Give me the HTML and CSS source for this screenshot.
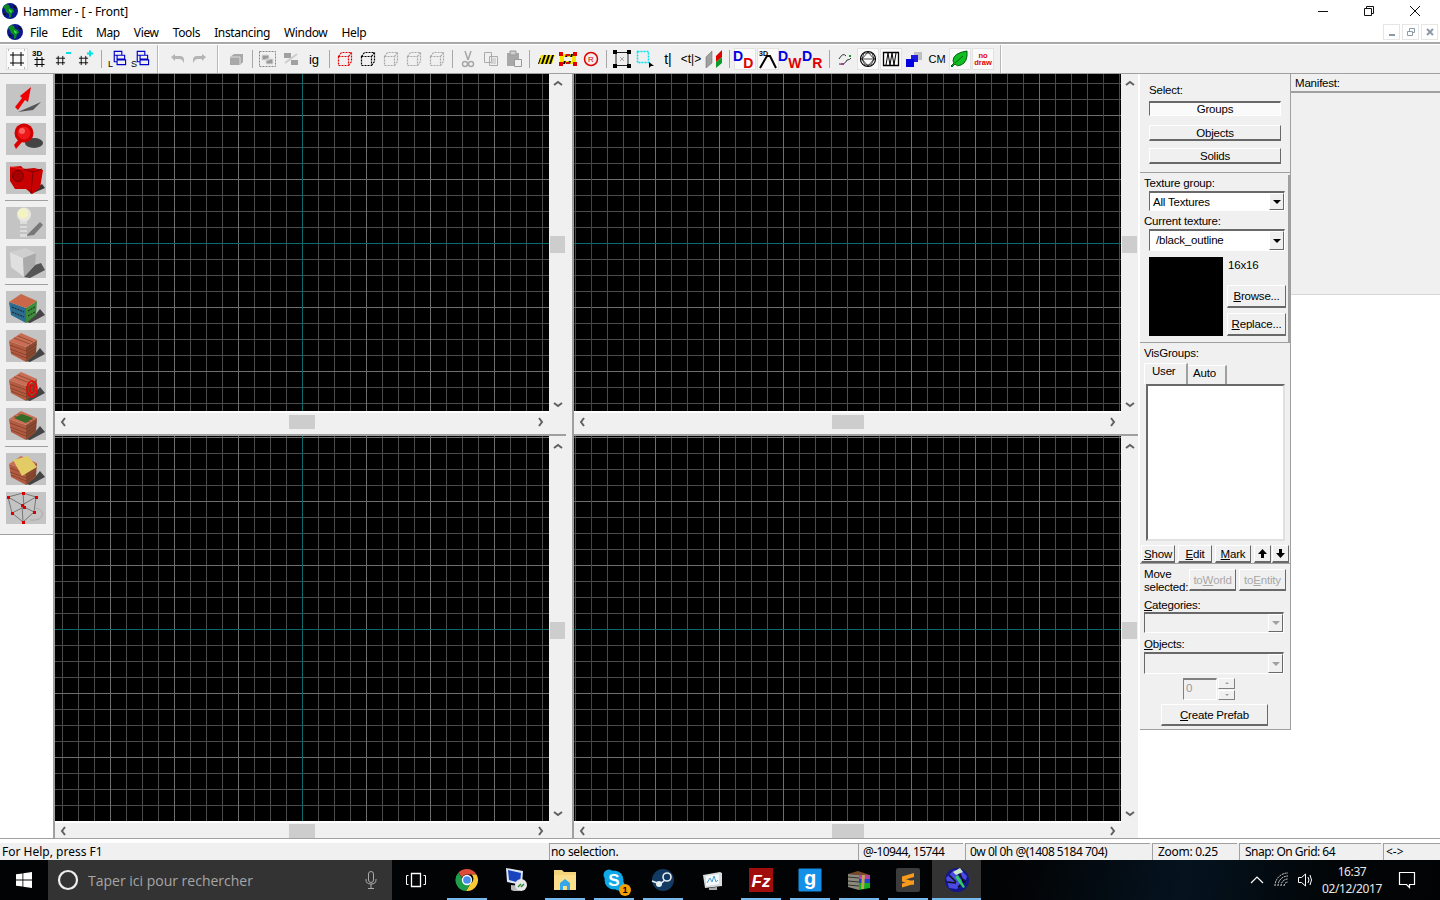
FILE: index.html
```html
<!DOCTYPE html>
<html lang="en">
<head>
    <meta charset="UTF-8">
    <title>Hammer - [ - Front]</title>
    <link rel="stylesheet" href="styles.css">
</head>
<body>
<svg class="defs" aria-hidden="true">
    <defs>
        <symbol id="globe" viewBox="0 0 16 16">
            <circle cx="8" cy="8" r="8" fill="#0a1a8c"/>
            <path d="M1 4l3-3 3 1 1 3 3 1 1 3-2 1-1 4-2 1 0-4-3-2-1-3z" fill="#0b8a22"/>
            <path d="M12 2l3 3-1 1-3-2zM2 10l2 1 0 2-2-1z" fill="#111"/>
            <path d="M7 6l3 2-1 2-2-2z" fill="#39e04a"/>
        </symbol>
        <symbol id="hash" viewBox="0 0 12 12">
            <path d="M3.500 1v10M8.500 1v10M1 3.500h10M1 8.500h10" stroke="#000" fill="none"/>
        </symbol>
        <symbol id="stack" viewBox="0 0 18 18">
            <path d="M4.500 1.500h8v4h-8zM7.500 5.500h8v4h-8zM7.500 10.500h9v5h-9zM4.500 5.500v7h3" fill="none" stroke="#0000c8" stroke-width="1.200"/>
        </symbol>
        <symbol id="dashcube" viewBox="0 0 16 16">
            <path d="M1.500 5.500h10v9h-10zM1.500 5.500l3-4h10l-3 4M14.500 1.500v9l-3 4" fill="none" stroke="currentColor" stroke-dasharray="2 1" stroke-width="1.200"/>
        </symbol>
        <symbol id="brick" viewBox="0 0 40 32">
            <path d="M20 31l10-8 4-5 5 6-15 8z" fill="#444"/>
            <path d="M3 11l17 6v15L5 24z" fill="#b45c42"/>
            <path d="M20 17l11-7-1 14-10 8z" fill="#8a4a32"/>
            <path d="M3 11L15 3l16 7-11 7z" fill="#c96e54"/>
            <path d="M4 15l16 6M4 19l16 6M5 22l15 6M20 21l11-7M20 25l10-7M20 28l10-7M8 8l16 6M12 6l15 6" stroke="#6e3424" stroke-width=".6" fill="none"/>
        </symbol>
    </defs>
</svg>

<div class="app">
    <header class="titlebar">
        <svg class="globe-sm"><use href="#globe"/></svg>
        <span class="title-text">Hammer - [ - Front]</span>
        <div class="win-btns">
            <span class="win-btn"><svg width="12" height="12" viewBox="0 0 12 12"><path d="M1 6.500h10" stroke="#111"/></svg></span>
            <span class="win-btn"><svg width="12" height="12" viewBox="0 0 12 12"><path d="M1.500 3.500h7v7h-7zM3.500 3.500v-2h7v7h-2" fill="none" stroke="#111"/></svg></span>
            <span class="win-btn"><svg width="12" height="12" viewBox="0 0 12 12"><path d="M1 1l10 10M11 1L1 11" stroke="#111"/></svg></span>
        </div>
    </header>

    <nav class="menubar">
        <svg class="globe-sm"><use href="#globe"/></svg>
        <ul class="menu">
            <li>File</li><li>Edit</li><li>Map</li><li>View</li><li>Tools</li><li>Instancing</li><li>Window</li><li>Help</li>
        </ul>
        <div class="mdi-btns">
            <span class="mdi-btn"><svg width="10" height="10" viewBox="0 0 10 10"><path d="M2 8h6" stroke="#8a9aa6" stroke-width="2"/></svg></span>
            <span class="mdi-btn"><svg width="10" height="10" viewBox="0 0 10 10"><path d="M1.500 4.500h5v4h-5zM3.500 4V1.500h5v4H7" fill="none" stroke="#8a9aa6"/></svg></span>
            <span class="mdi-btn"><svg width="10" height="10" viewBox="0 0 10 10"><path d="M2 2l6 6M8 2L2 8" stroke="#8a9aa6" stroke-width="2"/></svg></span>
        </div>
    </nav>

    <div class="toolbar">
        <span class="tb on"><svg width="20" height="20" viewBox="0 0 20 20"><path d="M6 3v14M14 3v14M3 6h14M3 14h14" stroke="#000"/><path d="M1 1h2M17 1h2M1 19h2M17 19h2" stroke="#777" stroke-dasharray="1 1"/></svg></span>
        <span class="tb"><svg class="ov" width="20" height="20" viewBox="0 0 20 20"><text x="2" y="7" class="ic-b" font-size="8">3D</text><use href="#hash" x="3" y="7" width="13" height="12"/></svg></span>
        <span class="tb"><svg width="20" height="20" viewBox="0 0 20 20"><use href="#hash" x="2" y="6" width="11" height="11"/><path d="M13 4h5" stroke="#00e0e0" stroke-width="2"/></svg></span>
        <span class="tb"><svg width="20" height="20" viewBox="0 0 20 20"><use href="#hash" x="2" y="6" width="11" height="11"/><path d="M11 4.500h6M14 1.500v6" stroke="#00e0e0" stroke-width="2"/></svg></span>
        <i class="sep"></i>
        <span class="tb"><svg class="ov" width="20" height="20" viewBox="0 0 20 20"><text x="1" y="18" class="ic-n" font-size="9">L</text><use href="#stack" x="3" y="1" width="17" height="17"/></svg></span>
        <span class="tb"><svg class="ov" width="20" height="20" viewBox="0 0 20 20"><text x="1" y="18" class="ic-n" font-size="9">S</text><use href="#stack" x="3" y="1" width="17" height="17"/></svg></span>
        <i class="divider"></i>
        <span class="tb"><svg width="20" height="20" viewBox="0 0 20 20"><path d="M4 8l4-3v2h5q4 0 4 4v3l-2-3q-1-1-3-1H8v2z" fill="#b4b4b4"/></svg></span>
        <span class="tb"><svg width="20" height="20" viewBox="0 0 20 20"><path d="M16 8l-4-3v2H7q-4 0-4 4v3l2-3q1-1 3-1h4v2z" fill="#b4b4b4"/></svg></span>
        <i class="divider"></i>
        <span class="tb"><svg width="20" height="20" viewBox="0 0 20 20"><path d="M3 8l4-3h9v8l-3 3H3z" fill="#a8a8a8"/><path d="M3 8h10v8" fill="none" stroke="#ddd"/></svg></span>
        <i class="sep"></i>
        <span class="tb"><svg width="20" height="20" viewBox="0 0 20 20"><path d="M1.500 2.500h16v15h-16z" fill="none" stroke="#888" stroke-dasharray="2 1"/><path d="M4 6h7v5H4zM8 10h7v5H8z" fill="#9a9a9a" stroke="#ddd"/></svg></span>
        <span class="tb"><svg width="20" height="20" viewBox="0 0 20 20"><path d="M3 4h7v5H3zM10 11h7v5h-7z" fill="#a0a0a0"/><path d="M4 14l12-9" stroke="#ccc" stroke-width="2"/></svg></span>
        <span class="tb"><span class="ic-html ig">ig</span></span>
        <i class="sep"></i>
        <span class="tb dc-red"><svg width="16" height="16"><use href="#dashcube"/></svg></span>
        <span class="tb dc-black"><svg width="16" height="16"><use href="#dashcube"/></svg></span>
        <span class="tb dc-gray"><svg width="16" height="16"><use href="#dashcube"/></svg></span>
        <span class="tb dc-gray"><svg width="16" height="16"><use href="#dashcube"/></svg></span>
        <span class="tb dc-gray"><svg width="16" height="16"><use href="#dashcube"/></svg></span>
        <i class="sep"></i>
        <span class="tb"><svg width="20" height="20" viewBox="0 0 20 20"><path d="M7 2l3 9M13 2l-3 9" stroke="#a8a8a8" stroke-width="1.500"/><circle cx="7" cy="15" r="2.500" fill="none" stroke="#a8a8a8" stroke-width="1.500"/><circle cx="13" cy="15" r="2.500" fill="none" stroke="#a8a8a8" stroke-width="1.500"/></svg></span>
        <span class="tb"><svg width="20" height="20" viewBox="0 0 20 20"><path d="M3.500 3.500h7v10h-7zM8.500 7.500h8v9h-8z" fill="#f0f0f0" stroke="#aaa"/><path d="M10 10h5M10 12h5M10 14h5" stroke="#bbb"/></svg></span>
        <span class="tb"><svg width="20" height="20" viewBox="0 0 20 20"><path d="M3 4h12v13H3z" fill="#a8a8a8"/><path d="M6 2h6v4H6z" fill="#cfcfcf" stroke="#999"/><path d="M10.500 10.500h7v7h-7z" fill="#f0f0f0" stroke="#999"/></svg></span>
        <i class="sep"></i>
        <span class="tb"><svg width="20" height="20" viewBox="0 0 20 20"><path d="M3 15l3-9h14l-3 9z" fill="#f4e400"/><path d="M6 15l3-9h2l-3 9zM10 15l3-9h2l-3 9zM14 15l3-9h2l-3 9zM3 15l2-6h1l-2 6z" fill="#000"/></svg></span>
        <span class="tb"><svg width="20" height="20" viewBox="0 0 20 20"><path d="M2 5h16v10H2z" fill="#f4e400"/><path d="M5 15l3-10h2l-3 10zM10 15l3-10h2l-3 10z" fill="#000"/><path d="M6 8h8v4H6z" fill="#f0f0f0"/><path d="M1 3h4v4H1zM15 3h4v4h-4zM1 13h4v4H1zM15 13h4v4h-4z" fill="#e00000"/><path d="M8 5h4v2H8zM8 13h4v2H8z" fill="#d01010"/></svg></span>
        <span class="tb"><svg width="20" height="20" viewBox="0 0 20 20"><circle cx="10" cy="10" r="6.500" fill="none" stroke="#e00000" stroke-width="1.500"/><text x="10" y="13" text-anchor="middle" class="ic-n red" font-size="8">R</text></svg></span>
        <i class="sep"></i>
        <span class="tb"><svg width="20" height="20" viewBox="0 0 20 20"><path d="M4 3.500h12v13H4z" fill="none" stroke="#222"/><path d="M1 1h4v4H1zM15 1h4v4h-4zM1 15h4v4H1zM15 15h4v4h-4z" fill="#000"/><path d="M8 8l4 4M12 8l-4 4" stroke="#aaa"/></svg></span>
        <span class="tb"><svg width="20" height="20" viewBox="0 0 20 20"><path d="M2.500 2.500h11v11h-11z" fill="none" stroke="#00e0f0" stroke-width="1.500" stroke-dasharray="2 1"/><path d="M14 13v6l2-2h3z" fill="#000"/></svg></span>
        <span class="tb"><span class="ic-html tl">t|</span></span>
        <span class="tb"><span class="ic-html tl2">&lt;t|&gt;</span></span>
        <span class="tb"><svg width="20" height="20" viewBox="0 0 20 20"><path d="M2 8l6-6v12l-6 5z" fill="#a0a0a0" stroke="#666" stroke-width=".5"/><path d="M12 7l6-6v7l-6 5z" fill="#e00000"/><path d="M12 13l6-5v6l-6 5z" fill="#0a9a2a"/></svg></span>
        <i class="sep"></i>
        <span class="tb on"><svg class="ov" width="20" height="20" viewBox="0 0 20 20"><text x="-2" y="12" class="ic-b blue" font-size="14">D</text><text x="8.200" y="19" class="ic-b red" font-size="14">D</text></svg></span>
        <span class="tb on"><svg class="ov" width="20" height="20" viewBox="0 0 20 20"><text x="1" y="7" class="ic-b" font-size="7">3D</text><path d="M2 19L9 7h3l6 12" fill="none" stroke="#000" stroke-width="2"/></svg></span>
        <span class="tb"><svg class="ov" width="20" height="20" viewBox="0 0 20 20"><text x="-3" y="12" class="ic-b blue" font-size="14">D</text><text x="7.200" y="19" class="ic-b red" font-size="14">W</text></svg></span>
        <span class="tb"><svg class="ov" width="20" height="20" viewBox="0 0 20 20"><text x="-2" y="12" class="ic-b blue" font-size="14">D</text><text x="8.200" y="19" class="ic-b red" font-size="14">R</text></svg></span>
        <i class="sep"></i>
        <span class="tb"><svg width="20" height="20" viewBox="0 0 20 20"><path d="M4 10q4-7 7-3M4 15q6 1 8-4M12 11q3 0 4-2" fill="none" stroke="#333"/><path d="M6 15h3" stroke="#b030b0" stroke-width="2"/><path d="M14 7h2" stroke="#0a9a2a" stroke-width="2"/></svg></span>
        <span class="tb on"><svg width="20" height="20" viewBox="0 0 20 20"><circle cx="10" cy="10" r="7.500" fill="none" stroke="#000" stroke-width="1.200"/><path d="M2.500 10h15M6 4l-2 6 3 6h6l3-6-2-6zM4 10l6-7 6 7-6 7z" fill="none" stroke="#000" stroke-width=".7"/></svg></span>
        <span class="tb on"><svg width="20" height="20" viewBox="0 0 20 20"><path d="M2.500 3.500h15v13h-15z" fill="none" stroke="#000" stroke-width="1.300"/><path d="M5 16l2-12 2 12 2-12 2 12 2-12" fill="none" stroke="#000"/></svg></span>
        <span class="tb"><svg width="20" height="20" viewBox="0 0 20 20"><path d="M10 3h8v8h-8z" fill="#a9a9a9" opacity=".7"/><path d="M7 6h7v7H7z" fill="#1a1ae0"/><path d="M2 10h8v8H2z" fill="#0000e0"/></svg></span>
        <span class="tb"><span class="ic-html cm">CM</span></span>
        <span class="tb on"><svg width="20" height="20" viewBox="0 0 20 20"><path d="M3 12Q3 4 17 2q1 11-6 14-4 2-6-1l-3 3-1-1 3-3z" fill="#10c020" stroke="#065f10" stroke-width="1"/><path d="M5 14l8-7" stroke="#065f10"/></svg></span>
        <span class="tb on"><span class="ic-html nodraw">no<br>draw</span></span>
        <i class="divider"></i>
    </div>

    <main class="workspace">
        <aside class="tools">
            <span class="tile"><svg width="40" height="32" viewBox="0 0 40 32"><path d="M12 28l23-10-8 8z" fill="#555"/><path d="M9 23l7-9-2-2L25 3l-3 15-3-2-7 10z" fill="#f00000"/></svg></span>
            <span class="tile"><svg width="40" height="32" viewBox="0 0 40 32"><ellipse cx="28" cy="20" rx="9" ry="5" fill="#444"/><path d="M8 22l5-6 3 3-6 7z" fill="#e00000"/><circle cx="18" cy="10" r="9.500" fill="#d00000"/><circle cx="18" cy="10" r="6.500" fill="#ee1818"/><circle cx="16" cy="8" r="3" fill="#ff6060"/></svg></span>
            <span class="tile"><svg width="40" height="32" viewBox="0 0 40 32"><path d="M24 30l12-8 3 4-14 6z" fill="#333"/><path d="M4 5l11-1 3 3 10-1 9 2-3 18-8 6-6-5H9l-5-8z" fill="#c80000"/><path d="M18 7l9 3 9-3M27 10l-2 21" fill="none" stroke="#780000"/><circle cx="12" cy="14" r="5.500" fill="#a80000" stroke="#700000"/><path d="M4 5l14 2" stroke="#e82020"/></svg></span>
            <i class="tool-sep"></i>
            <span class="tile"><svg width="40" height="32" viewBox="0 0 40 32"><path d="M20 29l14-14 3 3-9 10z" fill="#777"/><path d="M14 11h7v19h-7z" fill="#dcdcdc"/><path d="M14 18h7M14 22h7M14 26h7" stroke="#aaa"/><circle cx="18" cy="7.500" r="7" fill="#e8e8e0"/><circle cx="17" cy="6.500" r="5" fill="#f4f4c0"/></svg></span>
            <span class="tile"><svg width="40" height="32" viewBox="0 0 40 32"><path d="M18 31l11-12 6-2 4 7-15 8z" fill="#555"/><path d="M4 6l13 6 1 19L5 21z" fill="#e0e0e0"/><path d="M17 12l13-5-1 12-11 12z" fill="#aaa"/><path d="M4 6l15-4 11 5-13 5z" fill="#cfcfcf"/></svg></span>
            <i class="tool-sep"></i>
            <span class="tile"><svg width="40" height="32" viewBox="0 0 40 32"><path d="M20 31l10-8 4-5 5 6-15 8z" fill="#444"/><path d="M3 11l17 6v15L5 24z" fill="#2c6c90"/><path d="M20 17l11-7-1 14-10 8z" fill="#3c8c3c"/><path d="M3 11L15 3l16 7-11 7z" fill="#c86848"/><path d="M6 16l12 5M6 21l12 5M22 20l7-4M22 25l7-4" stroke="#1a1a1a" stroke-dasharray="2 1"/></svg></span>
            <span class="tile"><svg width="40" height="32"><use href="#brick"/></svg></span>
            <span class="tile"><svg width="40" height="32" viewBox="0 0 40 32"><use href="#brick" width="40" height="32"/><ellipse cx="26" cy="20" rx="5" ry="8" fill="none" stroke="#f00000" stroke-width="1.600"/><ellipse cx="26" cy="20" rx="2" ry="4" fill="none" stroke="#f00000" stroke-width="1.600"/></svg></span>
            <span class="tile"><svg width="40" height="32" viewBox="0 0 40 32"><use href="#brick" width="40" height="32"/><path d="M8 10l8-4 11 4-7 5z" fill="#356b26"/></svg></span>
            <i class="tool-sep"></i>
            <span class="tile"><svg width="40" height="32" viewBox="0 0 40 32"><use href="#brick" width="40" height="32"/><path d="M7 7L22 3l9 11-15 9z" fill="#e3cc66"/></svg></span>
            <span class="tile"><svg width="40" height="32" viewBox="0 0 40 32"><path d="M30 16q8 2 6 8-2 5-12 4" fill="none" stroke="#aaa"/><path d="M2 5L17 1l13 4-2 15-11 10L6 21zM16 13L2 5M16 13L30 5M16 13l1 17M18 15L17 1M18 15L6 21M18 15l10 5" fill="none" stroke="#777"/><path d="M1 4h3v3H1zM16 0h3v3h-3zM29 4h3v3h-3zM15 12h3v3h-3zM5 20h3v3H5zM17 14h3v3h-3zM27 19h3v3h-3zM16 29h3v3h-3z" fill="#d80000"/></svg></span>
        </aside>

        <section class="views">
            <div class="vp vp-tl">
                <div class="canvas"></div>
                <div class="vscroll"><svg class="chev" viewBox="0 0 10 6"><path d="M1 5l4-3 4 3" /></svg><b class="thumb-v"></b><svg class="chev" viewBox="0 0 10 6"><path d="M1 1l4 3 4-3" /></svg></div>
                <div class="hscroll"><svg class="chev-h" viewBox="0 0 6 10"><path d="M5 1L2 5l3 4" /></svg><b class="thumb-h"></b><svg class="chev-h" viewBox="0 0 6 10"><path d="M1 1l3 4-3 4" /></svg></div>
                <div class="corner"></div>
            </div>
            <div class="vp vp-tr">
                <div class="canvas"></div>
                <div class="vscroll"><svg class="chev" viewBox="0 0 10 6"><path d="M1 5l4-3 4 3" /></svg><b class="thumb-v"></b><svg class="chev" viewBox="0 0 10 6"><path d="M1 1l4 3 4-3" /></svg></div>
                <div class="hscroll"><svg class="chev-h" viewBox="0 0 6 10"><path d="M5 1L2 5l3 4" /></svg><b class="thumb-h wide"></b><svg class="chev-h" viewBox="0 0 6 10"><path d="M1 1l3 4-3 4" /></svg></div>
                <div class="corner"></div>
            </div>
            <div class="vp vp-bl">
                <div class="canvas"></div>
                <div class="vscroll"><svg class="chev" viewBox="0 0 10 6"><path d="M1 5l4-3 4 3" /></svg><b class="thumb-v"></b><svg class="chev" viewBox="0 0 10 6"><path d="M1 1l4 3 4-3" /></svg></div>
                <div class="hscroll"><svg class="chev-h" viewBox="0 0 6 10"><path d="M5 1L2 5l3 4" /></svg><b class="thumb-h"></b><svg class="chev-h" viewBox="0 0 6 10"><path d="M1 1l3 4-3 4" /></svg></div>
                <div class="corner"></div>
            </div>
            <div class="vp vp-br">
                <div class="canvas"></div>
                <div class="vscroll"><svg class="chev" viewBox="0 0 10 6"><path d="M1 5l4-3 4 3" /></svg><b class="thumb-v"></b><svg class="chev" viewBox="0 0 10 6"><path d="M1 1l4 3 4-3" /></svg></div>
                <div class="hscroll"><svg class="chev-h" viewBox="0 0 6 10"><path d="M5 1L2 5l3 4" /></svg><b class="thumb-h wide"></b><svg class="chev-h" viewBox="0 0 6 10"><path d="M1 1l3 4-3 4" /></svg></div>
                <div class="corner"></div>
            </div>
        </section>

        <aside class="side">
            <div class="sec sec-select">
                <div class="lbl select-lbl">Select:</div>
                <div class="btn btn-sel pressed">Groups</div>
                <div class="btn btn-sel">Objects</div>
                <div class="btn btn-sel">Solids</div>
            </div>
            <div class="sec sec-texture">
                <div class="lbl">Texture group:</div>
                <div class="combo combo-a"><span>All Textures</span><b class="drop"><i></i></b></div>
                <div class="lbl lbl-cur">Current texture:</div>
                <div class="combo combo-b"><span>/black_outline</span><b class="drop"><i></i></b></div>
                <div class="tex-row">
                    <div class="tex-preview"></div>
                    <div class="tex-side">
                        <div class="lbl tex-size">16x16</div>
                        <div class="btn btn-tex"><u>B</u>rowse...</div>
                        <div class="btn btn-tex"><u>R</u>eplace...</div>
                    </div>
                </div>
            </div>
            <div class="sec sec-vis">
                <div class="lbl">VisGroups:</div>
                <div class="tabs"><span class="tab tab-on">User</span><span class="tab">Auto</span></div>
                <div class="vislist"></div>
                <div class="vis-btns">
                    <span class="btn btn-w34"><u>S</u>how</span>
                    <span class="btn btn-w34"><u>E</u>dit</span>
                    <span class="btn btn-w36"><u>M</u>ark</span>
                    <span class="btn btn-arr"><svg width="11" height="11" viewBox="0 0 11 11"><path d="M5.500 1L10 6H7v4H4V6H1z"/></svg></span>
                    <span class="btn btn-arr"><svg width="11" height="11" viewBox="0 0 11 11"><path d="M5.500 10L10 5H7V1H4v4H1z"/></svg></span>
                </div>
            </div>
            <div class="sec sec-move">
                <div class="move-row">
                    <div class="lbl move-lbl">Move<br>selected:</div>
                    <span class="btn btn-off">to<u>W</u>orld</span>
                    <span class="btn btn-off">to<u>E</u>ntity</span>
                </div>
                <div class="lbl lbl-cat"><u>C</u>ategories:</div>
                <div class="combo combo-off"><b class="drop drop-off"><i></i></b></div>
                <div class="lbl lbl-obj"><u>O</u>bjects:</div>
                <div class="combo combo-off combo-obj"><b class="drop drop-off"><i></i></b></div>
                <div class="spin-row">
                    <span class="spin-val">0</span>
                    <span class="spin-btns"><i class="up"></i><i class="down"></i></span>
                </div>
                <div class="btn btn-prefab"><u>C</u>reate Prefab</div>
            </div>
        </aside>

        <aside class="manifest-wrap">
            <div class="manifest">
                <div class="manifest-head">Manifest:</div>
            </div>
        </aside>
    </main>

    <footer class="status">
        <span class="pane p-help">For Help, press F1</span>
        <span class="pane p-sel">no selection.</span>
        <span class="pane p-pos">@-10944, 15744</span>
        <span class="pane p-size">0w 0l 0h @(1408 5184 704)</span>
        <span class="pane p-zoom">Zoom: 0.25</span>
        <span class="pane p-snap">Snap: On Grid: 64</span>
        <span class="pane p-last">&lt;-&gt;</span>
    </footer>

    <div class="taskbar">
        <span class="start"><svg width="16" height="16" viewBox="0 0 16 16"><path d="M0 2.300l6.500-.9v6.200H0zM7.300 1.300L16 0v7.600H7.300zM0 8.400h6.500v6.200L0 13.700zM7.300 8.400H16V16l-8.700-1.200z" fill="#fff"/></svg></span>
        <div class="search">
            <svg class="search-ring" width="22" height="22" viewBox="0 0 22 22"><circle cx="11" cy="11" r="9" fill="none" stroke="#eee" stroke-width="2.200"/></svg>
            <span class="search-text">Taper ici pour rechercher</span>
            <svg width="12" height="18" viewBox="0 0 12 18"><rect x="3.500" y=".5" width="5" height="11" rx="2.500" fill="none" stroke="#aaa"/><path d="M1 8v1q0 4 5 4t5-4V8M6 13v4M3 17.500h6" fill="none" stroke="#aaa"/></svg>
        </div>
        <span class="taskview"><svg width="22" height="16" viewBox="0 0 22 16"><path d="M6.500 1.500h9v13h-9z" fill="none" stroke="#fff" stroke-width="1.300"/><path d="M3.500 3.500h-2v9h2M18.500 3.500h2v9h-2" fill="none" stroke="#fff"/></svg></span>
        <div class="apps">
            <span class="app-btn run"><svg width="24" height="24" viewBox="0 0 24 24"><path d="M12 1a11 11 0 0 1 9.500 5.500H12a5.500 5.500 0 0 0-5 3.200L3.500 4.500A11 11 0 0 1 12 1z" fill="#dd4b39"/><path d="M21.500 6.500A11 11 0 0 1 11 23l4.500-7.500a5.500 5.500 0 0 0 1-9z" fill="#fcc934"/><path d="M3.500 4.500L8 12a5 5 0 0 0 7.500 3.500L11 23A11 11 0 0 1 3.500 4.500z" fill="#1e9e4a"/><circle cx="12" cy="12" r="4.500" fill="#4a8df0" stroke="#fff" stroke-width="1.300"/></svg></span>
            <span class="app-btn"><svg width="24" height="26" viewBox="0 0 24 26"><path d="M2 1l17 3-1 14-15-3z" fill="#dce6f4"/><path d="M4 3l13 3-1 10-11-3z" fill="#1844c0"/><path d="M7 18l10 1v3a5 2 0 0 1-10 0z" fill="#bbb"/><circle cx="17" cy="18" r="6" fill="#e8e8e8"/><path d="M14 20l3-3M17 20l3-3" stroke="#2a8a3a" stroke-width="1.500"/></svg></span>
            <span class="app-btn run"><svg width="24" height="22" viewBox="0 0 24 22"><path d="M1 1h8l2 2h12v4H1z" fill="#f4d57a"/><path d="M1 6h22v15H1z" fill="#fbdf8a"/><path d="M7 14l5-4 5 4v7h-3v-4h-4v4H7z" fill="#35a7e8"/></svg></span>
            <span class="app-btn run skype"><svg width="24" height="24" viewBox="0 0 24 24"><circle cx="7" cy="7" r="5.500" fill="#0fa8e8"/><circle cx="17" cy="17" r="5.500" fill="#0fa8e8"/><circle cx="12" cy="12" r="9.500" fill="#0fa8e8"/><text x="12" y="18" text-anchor="middle" class="ic-b white" font-size="17">S</text></svg><b class="badge">1</b></span>
            <span class="app-btn run"><svg width="24" height="24" viewBox="0 0 24 24"><circle cx="12" cy="12" r="11" fill="#123a63"/><circle cx="16" cy="9" r="4" fill="none" stroke="#e8edf2" stroke-width="1.600"/><circle cx="8" cy="16" r="3" fill="#e8edf2"/><path d="M1 13l8 3 5-4" fill="none" stroke="#e8edf2" stroke-width="1.600"/></svg></span>
            <span class="app-btn"><svg width="24" height="24" viewBox="0 0 24 24"><path d="M3 7l17-3 2 1v13L5 20z" fill="#d8dde0"/><path d="M6 8l13-2v10L6 18z" fill="#f4f8fa"/><path d="M7 15l3-5 2 4 2-6 2 6 2-2" fill="none" stroke="#4a9fd8"/><path d="M9 20l8-1v3H9z" fill="#aaa"/></svg></span>
            <span class="app-btn run"><svg width="24" height="24" viewBox="0 0 24 24"><path d="M0 0h24v24H0z" fill="#a10c0c"/><text x="12" y="19" text-anchor="middle" class="ic-b white fz" font-size="17">Fz</text></svg></span>
            <span class="app-btn run"><svg width="24" height="24" viewBox="0 0 24 24"><rect width="23" height="23" x=".5" y=".5" rx="1" fill="#1590e8"/><text x="12" y="17" text-anchor="middle" class="ic-b white" font-size="20">g</text></svg></span>
            <span class="app-btn run"><svg width="24" height="24" viewBox="0 0 24 24"><path d="M1 6l10-3 12 4H12z" fill="#7a4a2a"/><path d="M1 6l11 1v15L1 19z" fill="#8c8a7c"/><path d="M12 7h11v4H12z" fill="#b040b0"/><path d="M12 11h11v4H12z" fill="#2040d0"/><path d="M12 15h11v5l-11 2z" fill="#10b020"/><path d="M15 7l-1 14h3l1-14z" fill="#c8a050"/><path d="M1 9l11 1M1 13l11 1M1 17l11 1" stroke="#333"/></svg></span>
            <span class="app-btn run"><svg width="24" height="24" viewBox="0 0 24 24"><rect width="24" height="24" rx="2" fill="#3c3c3c"/><path d="M6 8.500L18 5v4L6 12.500zM6 10l12 3.500V17L6 13.500zM6 15.500L18 12v4L6 19.500z" fill="#f89a1c"/></svg></span>
            <span class="app-btn run active"><svg width="26" height="26" viewBox="0 0 26 26"><circle cx="13" cy="13" r="12" fill="#14168c"/><path d="M2 11l8-8 6 1-4 6 7 2-6 10-8-1zM17 3l6 6-1 4-6-3z" fill="#4a4ae0"/><path d="M5 8l7 7M3 15l9 1M14 20l7-6M15 5l4 9" stroke="#111" stroke-width="1.500"/><path d="M9 5l7-4 3 4-7 3z" fill="#c8e8c8"/><path d="M14 8l7 12-2 1-8-11z" fill="#2fc96c"/></svg></span>
        </div>
        <div class="tray">
            <svg width="14" height="8" viewBox="0 0 14 8"><path d="M1 7l6-6 6 6" fill="none" stroke="#fff" stroke-width="1.200"/></svg>
            <svg class="tray-wifi" width="16" height="16" viewBox="0 0 16 16"><path d="M1 14A13 13 0 0 1 14 1M4 14A10 10 0 0 1 14 4M7 14a7 7 0 0 1 7-7M10 14a4 4 0 0 1 4-4" fill="none" stroke="#ddd" stroke-dasharray="2 .8"/></svg>
            <svg class="tray-vol" width="18" height="16" viewBox="0 0 18 16"><path d="M1.500 5.500h3l4-3.500v12l-4-3.500h-3z" fill="none" stroke="#fff"/><path d="M11 5q2 3 0 6M13 3q3 5 0 10" fill="none" stroke="#fff"/></svg>
            <div class="clock"><span>16:37</span><span>02/12/2017</span></div>
            <svg class="tray-note" width="18" height="18" viewBox="0 0 18 18"><path d="M1.500 1.500h15v12h-5v3l-3-3h-7z" fill="none" stroke="#fff" stroke-width="1.200"/></svg>
        </div>
    </div>
</div>
</body>
</html>
```

FILE: styles.css
```css
html, body {
    margin: 0;
    padding: 0;
    background: #fff;
}
.defs {
    position: absolute;
    width: 0;
    height: 0;
}
.app {
    width: 1440px;
    height: 900px;
    display: flex;
    flex-direction: column;
    overflow: hidden;
    font-family: "Noto Sans", "Open Sans", sans-serif;
    font-size: 12px;
    color: #000;
}

/* title + menu */
.titlebar {
    height: 22px;
    display: flex;
    align-items: center;
    padding-left: 2px;
    background: #fff;
}
.globe-sm {
    width: 16px;
    height: 16px;
    flex: none;
}
.title-text {
    margin-left: 5px;
    font-size: 12px;
    letter-spacing: -0.15px;
}
.win-btns {
    margin-left: auto;
    display: flex;
    padding-right: 2px;
}
.win-btn {
    width: 46px;
    height: 22px;
    display: flex;
    align-items: center;
    justify-content: center;
}
.menubar {
    height: 20px;
    display: flex;
    align-items: center;
    padding-left: 7px;
    background: #fff;
    border-bottom: 2px solid #a8a8a8;
}
.menu {
    list-style: none;
    display: flex;
    margin: 0;
    padding: 0 0 0 7px;
    gap: 14px;
    letter-spacing: -0.35px;
}
.mdi-btns {
    margin-left: auto;
    display: flex;
    gap: 2px;
    padding-right: 2px;
}
.mdi-btn {
    width: 15px;
    height: 14px;
    display: flex;
    align-items: center;
    justify-content: center;
    border: 1px solid #e6e6e6;
}

/* toolbar */
.toolbar {
    height: 29px;
    display: flex;
    align-items: center;
    padding-left: 6px;
    background: #f0f0f0;
    box-sizing: border-box;
    border-top: 1px solid #fff;
}
.tb {
    width: 22px;
    height: 22px;
    margin-right: 1px;
    display: flex;
    align-items: center;
    justify-content: center;
    flex: none;
    box-sizing: border-box;
}
.tb.on {
    background: #fafafa;
    border: 1px solid #e2e2e2;
}
.ov {
    overflow: visible;
}
.sep {
    width: 1px;
    height: 18px;
    margin: 0 4px 0 3px;
    background: #a8a8a8;
    flex: none;
}
.divider {
    width: 2px;
    height: 28px;
    margin: 0 7px 0 5px;
    background: #fff;
    border-left: 1px solid #b8b8b8;
    box-sizing: border-box;
    flex: none;
}
.ic-b {
    font-family: "Liberation Sans", sans-serif;
    font-weight: bold;
}
.ic-n {
    font-family: "Liberation Sans", sans-serif;
}
.blue { fill: #0000e0; }
.red { fill: #e00000; }
.white { fill: #fff; }
.fz { font-style: italic; }
.dc-red { color: #e00000; }
.dc-black { color: #000; }
.dc-gray { color: #a8a8a8; }
.ic-html {
    font-family: "Liberation Sans", sans-serif;
    line-height: 1;
}
.ig { font-size: 13px; }
.tl { font-size: 14px; }
.tl2 { font-size: 12px; white-space: nowrap; }
.cm { font-size: 11px; }
.nodraw {
    font-size: 7.5px;
    color: #e00000;
    text-align: center;
    font-weight: bold;
}

/* main area */
.workspace {
    height: 766px;
    display: flex;
    background: #fff;
    border-bottom: 1px solid #a0a0a0;
    border-top: 1px solid #a0a0a0;
    box-sizing: border-box;
}
.tools {
    width: 53px;
    height: 461px;
    flex: none;
    box-sizing: border-box;
    padding: 10px 0 0 6px;
    background: #f0f0f0;
    border-bottom: 1px solid #a0a0a0;
    display: flex;
    flex-direction: column;
    gap: 7px;
}
.tile {
    width: 40px;
    height: 32px;
    background: #c4c4c4;
    display: block;
}
.tile svg {
    display: block;
}
.tool-sep {
    height: 1px;
    width: 43px;
    margin: -1px 0 -1px -1px;
    background: #a0a0a0;
}

/* the four views */
.views {
    width: 1085px;
    flex: none;
    display: grid;
    grid-template-columns: 519px 566px;
    grid-template-rows: 360px 404px;
    background: #f0f0f0;
}
.vp {
    display: grid;
    grid-template-columns: 1fr 17px;
    grid-template-rows: 1fr 18px;
    border-left: 2px solid #a0a0a0;
    background: #f0f0f0;
}
.vp-tl { margin-right: 6px; padding-bottom: 4px; }
.vp-tr { padding-bottom: 4px; }
.vp-bl { margin-right: 6px; border-top: 2px solid #a0a0a0; }
.vp-br { border-top: 2px solid #a0a0a0; }
.vp-bl, .vp-br { grid-template-rows: 1fr 16px; }
.canvas {
    --minor: #4b4b4b;
    --major: #6e6e6e;
    --axis: linear-gradient(#0e6a6a, #0e6a6a);
    --edge: linear-gradient(#6a3a10, #6a3a10);
    --v-major: linear-gradient(to right, var(--major) 1px, transparent 1px);
    --h-major: linear-gradient(to bottom, var(--major) 1px, transparent 1px);
    --v-minor: linear-gradient(to right, var(--minor) 1px, transparent 1px);
    --h-minor: linear-gradient(to bottom, var(--minor) 1px, transparent 1px);
    background-color: #000;
    border-bottom: 1px solid #fff;
}
.vp-tl .canvas, .vp-bl .canvas {
    background-image: var(--axis), var(--axis), var(--v-major), var(--h-major), var(--v-minor), var(--h-minor);
    background-size: 1px 100%, 100% 1px, 64px 100%, 100% 64px, 16px 100%, 100% 16px;
    background-repeat: no-repeat, no-repeat, repeat, repeat, repeat, repeat;
}
.vp-tl .canvas {
    background-position: 247px 0, 0 169px, 55px 0, 0 41px, 7px 0, 0 9px;
}
.vp-bl .canvas {
    background-position: 247px 0, 0 193px, 55px 0, 0 1px, 7px 0, 0 1px;
}
.vp-tr .canvas, .vp-br .canvas {
    background-image: var(--edge), var(--edge), var(--axis), var(--axis), var(--v-major), var(--h-major), var(--v-minor), var(--h-minor);
    background-size: 1px 100%, 1px 100%, 1px 100%, 100% 1px, 64px 100%, 100% 64px, 16px 100%, 100% 16px;
    background-repeat: no-repeat, no-repeat, no-repeat, no-repeat, repeat, repeat, repeat, repeat;
}
.vp-tr .canvas {
    background-position: 17px 0, 529px 0, 273px 0, 0 169px, 17px 0, 0 41px, 1px 0, 0 9px;
}
.vp-br .canvas {
    background-position: 17px 0, 529px 0, 273px 0, 0 193px, 17px 0, 0 1px, 1px 0, 0 1px;
}
.vscroll {
    display: flex;
    flex-direction: column;
    align-items: center;
    justify-content: space-between;
    padding: 6px 0 4px;
    box-sizing: border-box;
}
.vp-bl .vscroll, .vp-br .vscroll {
    padding: 7px 0 5px;
}
.hscroll {
    display: flex;
    align-items: center;
    justify-content: space-between;
    padding: 0 5px;
    border-top: 1px solid #fff;
    box-sizing: border-box;
}
.chev {
    width: 10px;
    height: 6px;
    flex: none;
}
.chev-h {
    width: 6px;
    height: 10px;
    flex: none;
}
.chev path, .chev-h path {
    fill: none;
    stroke: #606060;
    stroke-width: 2;
}
.thumb-v {
    width: 15px;
    height: 17px;
    background: #cdcdcd;
}
.thumb-h {
    width: 26px;
    height: 14px;
    background: #cdcdcd;
}
.thumb-h.wide {
    width: 32px;
}
.corner {
    background: #f0f0f0;
}

/* side panel */
.side {
    width: 150px;
    height: 655px;
    margin-left: 2px;
    flex: none;
    background: #f0f0f0;
    border-bottom: 1px solid #a0a0a0;
    border-right: 1px solid #a0a0a0;
    font-family: "Liberation Sans", sans-serif;
    font-size: 11.5px;
    letter-spacing: -0.2px;
}
.sec {
    box-sizing: border-box;
    border-bottom: 1px solid #a0a0a0;
    margin-bottom: 2px;
}
.lbl {
    line-height: 13px;
}
.btn {
    display: flex;
    align-items: center;
    justify-content: center;
    box-sizing: border-box;
    background: #f0f0f0;
    border-top: 1px solid #fff;
    border-left: 1px solid #fff;
    border-right: 1px solid #696969;
    border-bottom: 2px solid #696969;
}
.sec-select {
    height: 99px;
    padding: 10px 0 0 9px;
}
.select-lbl {
    height: 17px;
}
.btn-sel {
    width: 132px;
    height: 16px;
    margin-bottom: 7px;
}
.btn-sel.pressed {
    height: 15px;
    margin-bottom: 9px;
    background: #fafafa;
    border-top: 2px solid #696969;
    border-left: 1px solid #696969;
    border-right: 1px solid #fff;
    border-bottom: 1px solid #fff;
}
.sec-texture {
    height: 168px;
    padding: 2px 0 0 4px;
    border-right: 2px solid #a0a0a0;
}
.combo {
    box-sizing: border-box;
    display: flex;
    align-items: center;
    justify-content: space-between;
    background: #fff;
    border-top: 2px solid #696969;
    border-left: 1px solid #696969;
    border-right: 1px solid #fff;
    border-bottom: 1px solid #fff;
}
.combo span {
    padding-left: 3px;
}
.combo-a {
    width: 136px;
    height: 20px;
    margin: 1px 0 0 5px;
}
.lbl-cur {
    margin-top: 4px;
}
.combo-b {
    width: 136px;
    height: 22px;
    margin: 1px 0 0 5px;
}
.combo-b span {
    padding: 0 0 2px 6px;
}
.drop {
    width: 15px;
    height: 100%;
    display: flex;
    align-items: center;
    justify-content: center;
    box-sizing: border-box;
    background: #f0f0f0;
    border-top: 1px solid #fff;
    border-left: 1px solid #fff;
    border-right: 1px solid #696969;
    border-bottom: 1px solid #696969;
}
.drop i {
    border-left: 4px solid transparent;
    border-right: 4px solid transparent;
    border-top: 4px solid #000;
}
.drop-off i {
    border-top-color: #a0a0a0;
}
.tex-row {
    display: flex;
    margin: 6px 0 0 5px;
}
.tex-preview {
    width: 74px;
    height: 79px;
    background: #000;
    flex: none;
}
.tex-side {
    margin-left: 4px;
}
.tex-size {
    height: 28px;
    padding: 2px 0 0 1px;
    box-sizing: border-box;
}
.btn-tex {
    width: 59px;
    height: 23px;
    margin-bottom: 5px;
}
.sec-vis {
    height: 219px;
    padding: 2px 0 0 4px;
}
.tabs {
    display: flex;
    height: 21px;
    align-items: flex-end;
    margin-top: 3px;
}
.tab {
    width: 39px;
    height: 19px;
    box-sizing: border-box;
    padding: 1px 0 0 5px;
    border-top: 1px solid #fff;
    border-right: 2px solid #a0a0a0;
}
.tab-on {
    width: 44px;
    height: 21px;
    padding: 1px 0 0 7px;
    border-left: 1px solid #fff;
}
.vislist {
    width: 139px;
    height: 157px;
    margin: 0 0 0 2px;
    box-sizing: border-box;
    background: #fff;
    border-top: 2px solid #696969;
    border-left: 2px solid #696969;
    border-right: 2px solid #e0e0e0;
    border-bottom: 2px solid #e0e0e0;
}
.vis-btns {
    display: flex;
    margin: 4px 0 0 -3px;
    gap: 3px;
}
.btn-w34 { width: 34px; height: 18px; }
.btn-w36 { width: 36px; height: 18px; }
.btn-arr { width: 17px; height: 18px; margin-right: -2px; }
.sec-move {
    height: 163px;
    margin-bottom: 0;
    border-bottom: 0;
    padding: 2px 0 0 4px;
}
.move-row {
    display: flex;
    height: 26px;
    gap: 3px;
    align-items: center;
}
.move-lbl {
    width: 42px;
    white-space: nowrap;
}
.btn-off {
    width: 47px;
    height: 22px;
    margin-bottom: 2px;
    color: #a8a8a8;
}
.lbl-cat {
    margin-top: 5px;
}
.lbl-obj {
    margin-top: 5px;
}
.combo-off {
    width: 140px;
    height: 21px;
    background: #f0f0f0;
    justify-content: flex-end;
}
.combo-obj {
    height: 22px;
    margin-top: 1px;
}
.spin-row {
    display: flex;
    margin: 4px 0 0 39px;
}
.spin-val {
    width: 34px;
    height: 22px;
    box-sizing: border-box;
    padding: 2px 0 0 2px;
    color: #999;
    border-top: 2px solid #808080;
    border-left: 1px solid #808080;
    border-right: 1px solid #fff;
    border-bottom: 1px solid #fff;
}
.spin-btns {
    width: 17px;
    margin-left: 1px;
    display: flex;
    flex-direction: column;
    gap: 1px;
}
.spin-btns i {
    flex: 1;
    display: flex;
    align-items: center;
    justify-content: center;
    border-top: 1px solid #fff;
    border-right: 1px solid #808080;
    border-bottom: 1px solid #808080;
    border-left: 1px solid #fff;
}
.spin-btns .up::after {
    content: "";
    border: 2px solid transparent;
    border-top: 0;
    border-bottom: 2px solid #a0a0a0;
}
.spin-btns .down::after {
    content: "";
    border: 2px solid transparent;
    border-bottom: 0;
    border-top: 2px solid #a0a0a0;
}
.btn-prefab {
    width: 107px;
    height: 22px;
    margin: 4px 0 0 17px;
}
.manifest-wrap {
    flex: 1;
}
.manifest {
    height: 220px;
    background: #f0f0f0;
    border-bottom: 1px solid #d8d8d8;
    font-family: "Liberation Sans", sans-serif;
    font-size: 11.5px;
    letter-spacing: -0.2px;
}
.manifest-head {
    height: 19px;
    padding: 3px 0 0 4px;
    box-sizing: border-box;
    border-bottom: 2px solid #a0a0a0;
}

/* status bar */
.status {
    height: 17px;
    margin-top: 4px;
    display: flex;
    background: #f0f0f0;
    white-space: nowrap;
}
.pane {
    box-sizing: border-box;
    padding-left: 2px;
    line-height: 16px;
    border-left: 1px solid #a0a0a0;
    border-top: 1px solid #a0a0a0;
    margin-right: 2px;
}
.p-help { width: 549px; border: 0; margin: 0; line-height: 17px; }
.p-sel { width: 309px; margin: 0; padding-left: 1px; letter-spacing: -0.3px; }
.p-pos { width: 105px; padding-left: 4px; letter-spacing: -0.6px; }
.p-size { width: 185px; padding-left: 4px; letter-spacing: -0.5px; }
.p-zoom { width: 85px; padding-left: 5px; letter-spacing: -0.3px; }
.p-snap { width: 142px; padding-left: 5px; letter-spacing: -0.5px; }
.p-last { flex: 1; margin: 0; padding-left: 2px; }

/* taskbar */
.taskbar {
    height: 40px;
    display: flex;
    align-items: center;
    background: linear-gradient(100deg, #020304 70%, #05131f 82%, #020608 92%, #020304);
    color: #fff;
}
.start {
    width: 48px;
    height: 40px;
    display: flex;
    align-items: center;
    justify-content: center;
    flex: none;
}
.search {
    width: 344px;
    height: 40px;
    flex: none;
    display: flex;
    align-items: center;
    background: #333;
    padding: 0 15px 0 9px;
    box-sizing: border-box;
}
.search-text {
    margin-left: 9px;
    flex: 1;
    color: #a6a6a6;
    font-family: "Open Sans", sans-serif;
    font-size: 14px;
}
.taskview {
    width: 48px;
    display: flex;
    justify-content: center;
    flex: none;
}
.apps {
    display: flex;
    margin-left: 2px;
}
.app-btn {
    width: 49px;
    height: 40px;
    display: flex;
    align-items: center;
    justify-content: center;
    position: relative;
}
.app-btn.run {
    background: linear-gradient(#76b9ed, #76b9ed) no-repeat center bottom / 40px 2px;
}
.app-btn.active {
    background: #333 linear-gradient(#76b9ed, #76b9ed) no-repeat center bottom / 100% 2px;
}
.badge {
    position: absolute;
    right: 7px;
    bottom: 4px;
    width: 12px;
    height: 12px;
    border-radius: 50%;
    background: #f5a100;
    color: #000;
    font-size: 9px;
    line-height: 12px;
    text-align: center;
    font-family: "Liberation Sans", sans-serif;
}
.tray {
    margin-left: auto;
    display: flex;
    align-items: center;
    padding-right: 24px;
}
.tray-wifi { margin-left: 10px; }
.tray-vol { margin-left: 7px; }
.clock {
    width: 70px;
    margin-left: 2px;
    display: flex;
    flex-direction: column;
    align-items: center;
    font-size: 12px;
    line-height: 17px;
    letter-spacing: -0.4px;
    color: #e8e8e8;
}
.tray-note { margin-left: 11px; }
```
